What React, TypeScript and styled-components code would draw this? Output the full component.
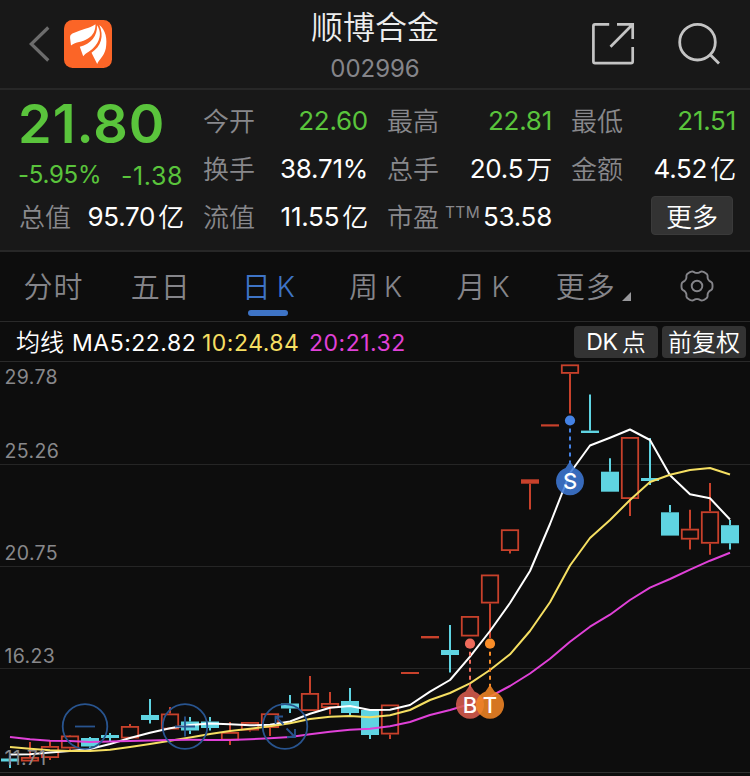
import React from "react";
import styled, { createGlobalStyle } from "styled-components";

const GlobalStyle = createGlobalStyle`
  * { box-sizing: border-box; }
  html, body { margin: 0; background: #0d0d0d; }
  body { font-family: Inter, "Noto Sans CJK SC", sans-serif; font-weight: 400; }
`;

const Screen = styled.main`
  width: 750px;
  height: 776px;
  overflow: hidden;
  background: #0d0d0d;
  display: flex;
  flex-direction: column;
`;

const Header = styled.header`
  height: 90px;
  flex: none;
  background: #181818;
  border-bottom: 2px solid #272727;
  display: grid;
  grid-template-columns: 250px 250px 250px;
`;

const HeaderLeft = styled.div`
  display: flex;
  align-items: center;
  padding-left: 28px;
  gap: 14px;
`;

const HeaderRight = styled.div`
  display: flex;
  align-items: center;
  justify-content: flex-end;
  padding-right: 28px;
  gap: 43px;
`;

const TitleBlock = styled.div`
  display: flex;
  flex-direction: column;
  align-items: center;
`;

const Title = styled.div`
  margin-top: 5px;
  font-size: 32px;
  line-height: 40px;
  font-family: "Noto Sans CJK SC", sans-serif;
  font-weight: 350;
  color: #ededed;
`;

const Code = styled.div`
  margin-top: 8px;
  font-size: 24px;
  line-height: 32px;
  color: #85858a;
  letter-spacing: -0.05px;
`;

const Quote = styled.section`
  height: 162px;
  flex: none;
  background: #181818;
  border-bottom: 2px solid #272727;
  padding: 7px 15px 0 19px;
  display: grid;
  grid-template-columns: repeat(4, 164px);
  grid-template-rows: repeat(3, 48px);
  column-gap: 20px;
`;

const Price = styled.div`
  margin-left: -1px;
  font-size: 54px;
  line-height: 54px;
  font-weight: 600;
  letter-spacing: 1px;
  color: #5ac43c;
`;

const Change = styled.div`
  display: flex;
  justify-content: space-between;
  padding-top: 6px;
  margin-left: -1px;
  font-size: 25px;
  line-height: 50px;
  color: #5ac43c;
  letter-spacing: 0.6px;
`;

const Percent = styled.span`
  font-size: 24px;
  line-height: 48px;
  letter-spacing: -0.25px;
`;

const Stat = styled.div`
  display: flex;
  justify-content: space-between;
  align-items: center;
  line-height: 48px;
`;

const Label = styled.span`
  font-family: "Noto Sans CJK SC", sans-serif;
  font-weight: 350;
  font-size: 26px;
  line-height: 46px;
  margin: -2px 0 0 0;
  color: #88888c;
  white-space: nowrap;
`;

const Sup = styled.span`
  font-family: Inter, sans-serif;
  font-size: 15.5px;
  color: #88888c;
  line-height: 20px;
  margin: -8px 0 0 3px;
  letter-spacing: 0.3px;
`;

const Value = styled.span<{ $down?: boolean }>`
  display: flex;
  gap: 3px;
  margin-right: -1px;
  font-size: 26px;
  white-space: nowrap;
  color: ${(p) => (p.$down ? "#5ac43c" : "#fff")};
  letter-spacing: -0.25px;
`;

const Unit = styled.span`
  font-family: "Noto Sans CJK SC", sans-serif;
  font-weight: 350;
  margin-top: -1px;
`;

const MoreButton = styled.button`
  justify-self: end;
  margin: 3px 2px 0 0;
  width: 82px;
  height: 39px;
  border: 1px solid #3a3a3a;
  border-radius: 4px;
  padding: 0;
  background: #333;
  color: #fff;
  font: 350 26px/35px "Noto Sans CJK SC", sans-serif;
`;

const Tabs = styled.nav`
  height: 70px;
  flex: none;
  border-bottom: 1px solid #2a2a2a;
  display: grid;
  grid-template-columns: repeat(7, 1fr);
`;

const Tab = styled.div<{ $active?: boolean }>`
  display: flex;
  flex-direction: column;
  align-items: center;
  color: ${(p) => (p.$active ? "#3e74c6" : "#85858a")};
`;

const TabText = styled.div<{ $nudge?: number }>`
  height: 58px;
  display: flex;
  align-items: center;
  gap: 5px;
  padding-top: 7px;
  padding-left: ${(p) => p.$nudge ?? 0}px;
  font-size: 29px;
  line-height: 44px;
  font-family: "Noto Sans CJK SC", sans-serif;
  font-weight: 350;
  letter-spacing: 1px;
  white-space: nowrap;
`;

const Latin = styled.span`
  font-family: Inter, sans-serif;
  font-weight: 350;
`;

const TabLatin = styled(Latin)`
  font-size: 28px;
  padding-top: 4px;
`;

const Underline = styled.div`
  width: 40px;
  height: 6px;
  border-radius: 3px;
  background: #3e74c6;
`;

const Corner = styled.svg`
  margin-top: 24px;
  margin-left: 1px;
`;

const Gear = styled.svg`
  margin-top: 2px;
`;

const Averages = styled.div`
  height: 40px;
  flex: none;
  border-bottom: 1px solid #2a2a2a;
  display: flex;
  align-items: center;
  padding: 0 4px 0 16px;
  font-size: 23px;
  letter-spacing: 0.5px;
  color: #fff;
`;

const AverageName = styled.span`
  font-family: "Noto Sans CJK SC", sans-serif;
  font-weight: 350;
  font-size: 24px;
  letter-spacing: 0;
  line-height: 36px;
  margin-top: -1px;
  width: 56px;
`;

const Average = styled.span<{ $color: string; $width?: number }>`
  color: ${(p) => p.$color};
  width: ${(p) => p.$width}px;
  line-height: 38px;
  padding-top: 2px;
  white-space: nowrap;
`;

const Chip = styled.button`
  width: 84px;
  height: 32px;
  border: 0;
  border-radius: 4px;
  padding: 0 0 1px;
  margin-left: 4px;
  background: #333;
  color: #fff;
  display: flex;
  align-items: center;
  justify-content: center;
  gap: 4px;
  white-space: nowrap;
  font: 350 24px/30px "Noto Sans CJK SC", sans-serif;
`;

const ChipLatin = styled(Latin)`
  font-size: 23px;
  font-weight: 400;
  letter-spacing: -0.4px;
  padding-top: 2px;
`;

const Spacer = styled.div`
  flex: 1;
`;

const ChartArea = styled.section`
  height: 414px;
  svg { display: block; }
`;

const RED = "#c8412b";
const CYAN = "#5fd4e2";

type Candle = { up: boolean; top: number; bottom: number; high: number; low: number };
const c = (up: boolean, top: number, bottom: number, high = top, low = bottom): Candle => ({ up, top, bottom, high, low });

const candles: Candle[] = [
  c(false, 758.5, 761.5, 756, 768),
  c(true, 757, 761.5, 742),
  c(true, 746, 758, 741, 760),
  c(true, 735.5, 748.5, 735, 750),
  c(false, 738, 746.5, 737, 748),
  c(false, 735, 738, 733, 741),
  c(true, 726, 738.5, 724),
  c(false, 715, 720, 699, 723.5),
  c(true, 713.5, 729.5, 707),
  c(false, 721.5, 730.5, 717, 734),
  c(false, 721.5, 728, 717, 730.5),
  c(true, 732, 740.5, 722, 745),
  c(true, 722, 730.5, 722, 731.5),
  c(true, 713.3, 728, 713.3, 736),
  c(false, 703.5, 708.5, 695, 713),
  c(true, 693, 711, 676),
  c(true, 703, 708, 692, 714.5),
  c(false, 701, 713, 688, 715),
  c(false, 710, 735, 710, 739),
  c(true, 704.5, 734.5, 704.5, 739),
  c(true, 672, 674),
  c(true, 636, 638.4),
  c(false, 650, 655, 625, 672.5),
  c(true, 616, 636.5),
  c(true, 574.5, 603.5, 574.5, 638),
  c(true, 529.3, 551, 529.3, 553.5),
  c(true, 479.3, 483.7, 479.3, 509.5),
  c(true, 424.3, 426.5),
  c(true, 364.4, 373.8, 364.4, 413.5),
  c(false, 430.6, 433, 394.5),
  c(false, 471.7, 491.7, 458.3),
  c(true, 437, 499, 437, 516),
  c(false, 478, 481, 438, 485),
  c(false, 512.3, 535.6, 505),
  c(true, 528.7, 539.6, 509.7, 549.6),
  c(true, 511.3, 543.7, 483, 554.7),
  c(false, 525.2, 543.3, 520, 549.5),
];

const ma5 = [754.5, 754.3, 752.5, 751, 749, 744, 738, 732.7, 728.3, 725, 723.5, 724.3, 725.3, 724.8, 721.5, 713.7, 707.7, 706, 710, 709.7, 705, 691.7, 680, 656.7, 631, 603, 571, 524, 473, 445.5, 437.7, 429.5, 440, 475.3, 494.3, 498.3, 519.5];
const ma10 = [747, 748.7, 750.3, 751, 751, 749.7, 747, 744, 740.7, 737.5, 734, 731, 728.7, 726.3, 723.3, 719, 716.7, 716, 717.3, 715.3, 710, 700, 693, 683.3, 670, 654.3, 631, 602.3, 565.5, 538, 520, 500, 482, 474.7, 470, 468, 474.5];
const ma20 = [737, 739.3, 740.7, 741, 742, 741.5, 741, 740.5, 740, 739.8, 740, 740, 739.3, 738.3, 737, 734.3, 731.7, 729.7, 728.7, 726.3, 722, 715, 710, 704, 696.7, 686, 673.5, 658.7, 641.7, 626.7, 614.7, 600, 587.7, 579, 569.7, 560.7, 552.7];

const toPoints = (values: number[]) => values.map((y, i) => `${10 + i * 20},${y}`).join(" ");

function CandleMark({ x, d }: { x: number; d: Candle }) {
  const color = d.up ? RED : CYAN;
  const hollow = d.up && d.bottom - d.top > 4.4;
  return (
    <g stroke={color} strokeWidth="2" fill="none">
      {d.high < d.top && <path d={`M${x} ${d.high}V${d.top}`} />}
      {d.low > d.bottom && <path d={`M${x} ${d.bottom}V${d.low}`} />}
      {hollow ? (
        <rect x={x - 8.2} y={d.top + 0.9} width="16.4" height={d.bottom - d.top - 1.8} strokeWidth="1.8" />
      ) : (
        <rect x={x - 9} y={d.top} width="18" height={d.bottom - d.top} fill={color} stroke="none" />
      )}
    </g>
  );
}

type MarkerProps = { x: number; dot: number; y: number; color: string; dotColor: string; letter: string };
function TradeMarker({ x, dot, y, color, dotColor, letter }: MarkerProps) {
  return (
    <g>
      <path d={`M${x} ${dot + 8}V${y - 17}`} stroke={dotColor} strokeWidth="2" strokeDasharray="4 4" />
      <circle cx={x} cy={dot} r="5.1" fill={dotColor} />
      <path
        d={`M${x} ${y - 20}L${x + 4.5} ${y - 13.3}A14 14 0 1 1 ${x - 4.5} ${y - 13.3}Z`}
        fill={color}
        opacity="0.88"
      />
      <text x={x} y={y + 8} textAnchor="middle" fontFamily="Inter" fontSize="22" fontWeight="500" fill="#fff">
        {letter}
      </text>
    </g>
  );
}

const axis: [string, number][] = [
  ["29.78", 384.3],
  ["25.26", 458.3],
  ["20.75", 560],
  ["16.23", 662.7],
  ["11.71", 764.5],
];

function Chart() {
  return (
    <svg width="750" height="414" viewBox="0 362 750 414">
      <g stroke="#252525" strokeWidth="1">
        <path d="M0 464.5H750M0 566.5H750M0 668.5H750" />
        <path d="M0 772.5H750" stroke="#303030" />
      </g>
      {candles.map((d, i) => (
        <CandleMark key={i} x={10 + i * 20} d={d} />
      ))}
      <g fill="none" strokeWidth="2" strokeLinejoin="round">
        <polyline points={toPoints(ma5)} stroke="#fff" />
        <polyline points={toPoints(ma10)} stroke="#f5df62" />
        <polyline points={toPoints(ma20)} stroke="#e041d8" />
      </g>
      <g fontFamily="Inter" fontSize="19.5" fill="#88888b" letterSpacing="0.35">
        {axis.map(([label, y]) => (
          <text key={label} x="4.5" y={y}>{label}</text>
        ))}
      </g>
      <g fill="none" stroke="#28548f" strokeWidth="1.8">
        <circle cx="85" cy="726.5" r="22.3" />
        <path d="M75 726.5H95" />
        <circle cx="185" cy="726.5" r="22.3" />
        <path d="M175 726.5H195M185 716.5V736.5" />
        <circle cx="285" cy="726.5" r="22.3" />
        <path d="M275.5 724V716.5H283M275.5 716.5L283.5 724.5M295 729V737H287M295 737L286.5 728.5" />
      </g>
      <TradeMarker x={470} dot={643.7} y={704.8} color="#d85c4e" dotColor="#ee6b5b" letter="B" />
      <TradeMarker x={490} dot={643.7} y={704.8} color="#f18524" dotColor="#f98d28" letter="T" />
      <TradeMarker x={570} dot={420.5} y={481.3} color="#3d78d4" dotColor="#4482e5" letter="S" />
    </svg>
  );
}

const gearPath =
  Array.from({ length: 120 }, (_, i) => {
    const a = (i / 120) * Math.PI * 2;
    const r = 14.2 + 1.35 * Math.tanh(1.8 * Math.cos(6 * a) + 0.6);
    return `${i ? "L" : "M"}${(18 + r * Math.cos(a)).toFixed(2)} ${(18 + r * Math.sin(a)).toFixed(2)}`;
  }).join("") + "Z";

const BackIcon = () => (
  <svg width="22" height="36" viewBox="0 0 22 36" fill="none" stroke="#6c6c6c" strokeWidth="3.2">
    <path d="M20.3 1.5L3.3 18L20.3 34.5" />
  </svg>
);

const BrandLogo = () => (
  <svg width="48" height="48" viewBox="64 20 48 48">
    <rect x="64" y="20" width="48" height="48" rx="8.5" fill="#fb6527" />
    <g fill="#fff">
      <path d="M95.5 24.2C89 28.5 82 29 73 33.3C70 35 70 36 70.2 39L71 45.6C76 41.5 82 42.5 88 38.5C93 35.5 95.6 30.5 95.5 24.2Z" />
      <path d="M97 25.2C97.5 36 91 44 79.8 46.7L83.2 56.2C86 52.5 91 51.5 95.5 45.5C101 38.5 101.2 31 97 25.2Z" />
      <path d="M99.3 25C104.2 36 101.3 46 91.5 52.8L97.2 64C99 59.5 104 56.5 105.8 48.5C107.5 39 105.8 30 99.3 25Z" />
    </g>
  </svg>
);

const ShareIcon = () => (
  <svg width="44" height="44" viewBox="0 0 44 44" fill="none" stroke="#c4c4c4" strokeWidth="2.7">
    <path d="M18.2 2.4H4Q2.4 2.4 2.4 4V39.5Q2.4 41.2 4 41.2H40Q41.7 41.2 41.7 39.5V25M26 2.4H41.7V17M41 3L19.5 24.7" />
  </svg>
);

const SearchIcon = () => (
  <svg width="44" height="44" viewBox="0 0 44 44" fill="none" stroke="#c4c4c4" strokeWidth="2.8">
    <circle cx="19.5" cy="20.2" r="17.8" />
    <path d="M32 32.5L41 41.5" />
  </svg>
);

type StatItem = { label: string; value: string; unit?: string; down?: boolean; sup?: string };
const StatCell = ({ label, value, unit, down, sup }: StatItem) => (
  <Stat>
    <Label>{label}</Label>
    {sup && <Sup>{sup}</Sup>}
    <Value $down={down}>
      {value}
      {unit && <Unit>{unit}</Unit>}
    </Value>
  </Stat>
);

const LatinTab = ({ name, active, nudge }: { name: string; active?: boolean; nudge: number }) => (
  <Tab $active={active}>
    <TabText $nudge={nudge}>
      {name}
      <TabLatin>K</TabLatin>
    </TabText>
    {active && <Underline />}
  </Tab>
);

export default function App() {
  return (
    <>
      <GlobalStyle />
      <Screen>
        <Header>
          <HeaderLeft>
            <BackIcon />
            <BrandLogo />
          </HeaderLeft>
          <TitleBlock>
            <Title>顺博合金</Title>
            <Code>002996</Code>
          </TitleBlock>
          <HeaderRight>
            <ShareIcon />
            <SearchIcon />
          </HeaderRight>
        </Header>
        <Quote>
          <Price>21.80</Price>
          <StatCell label="今开" value="22.60" down />
          <StatCell label="最高" value="22.81" down />
          <StatCell label="最低" value="21.51" down />
          <Change>
            <Percent>-5.95%</Percent>
            <span>-1.38</span>
          </Change>
          <StatCell label="换手" value="38.71%" />
          <StatCell label="总手" value="20.5" unit="万" />
          <StatCell label="金额" value="4.52" unit="亿" />
          <StatCell label="总值" value="95.70" unit="亿" />
          <StatCell label="流值" value="11.55" unit="亿" />
          <StatCell label="市盈" sup="TTM" value="53.58" />
          <MoreButton>更多</MoreButton>
        </Quote>
        <Tabs>
          <Tab><TabText>分时</TabText></Tab>
          <Tab><TabText>五日</TabText></Tab>
          <LatinTab name="日" active nudge={2} />
          <LatinTab name="周" nudge={2} />
          <LatinTab name="月" nudge={3} />
          <Tab>
            <TabText $nudge={8}>
              更多
              <Corner width="9" height="9" viewBox="0 0 9 9"><path d="M9 0V9H0Z" fill="#98989b" /></Corner>
            </TabText>
          </Tab>
          <Tab>
            <TabText $nudge={2}>
              <Gear width="36" height="36" viewBox="0 0 36 36" fill="none" stroke="#85858a" strokeWidth="1.9">
                <path d={gearPath} />
                <circle cx="18" cy="18" r="5.3" />
              </Gear>
            </TabText>
          </Tab>
        </Tabs>
        <Averages>
          <AverageName>均线</AverageName>
          <Average $color="#fff" $width={130}>MA5:22.82</Average>
          <Average $color="#f5df62" $width={107}>10:24.84</Average>
          <Average $color="#e041d8" $width={100}>20:21.32</Average>
          <Spacer />
          <Chip><ChipLatin>DK</ChipLatin>点</Chip>
          <Chip>前复权</Chip>
        </Averages>
        <ChartArea>
          <Chart />
        </ChartArea>
      </Screen>
    </>
  );
}
